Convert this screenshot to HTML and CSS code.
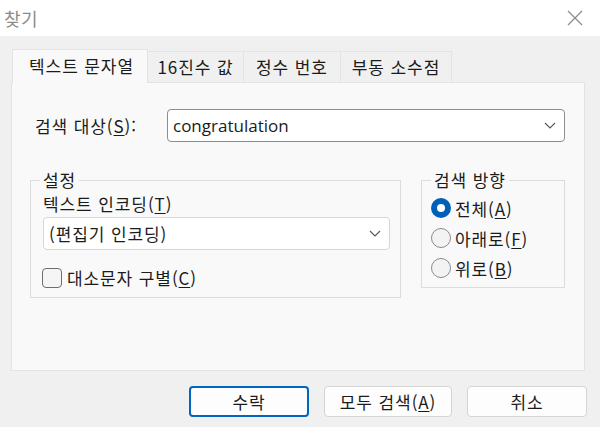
FILE: index.html
```html
<!DOCTYPE html>
<html lang="ko">
<head>
<meta charset="utf-8">
<link rel="stylesheet" href="styles.css">
</head>
<body>
<div class="window">
  <div class="titlebar">
    <span class="title">찾기</span>
    <svg class="close" width="16" height="16" viewBox="0 0 16 16"><path d="M1 1 L15 15 M15 1 L1 15" stroke="#8a8a8a" stroke-width="1.2" fill="none"/></svg>
  </div>
  <div class="body">
    <div class="tabs">
      <div class="tab active">텍스트 문자열</div>
      <div class="tab t2">16진수 값</div>
      <div class="tab t3">정수 번호</div>
      <div class="tab t4">부동 소수점</div>
    </div>
    <div class="panel">
      <div class="search-row">
        <span class="label">검색 대상(<u>S</u>):</span>
        <div class="combo main-combo">
          <span class="combo-text latin">congratulation</span>
          <svg class="chev" width="12" height="7" viewBox="0 0 12 7"><path d="M1 1 L6 6 L11 1" stroke="#5a5a5a" stroke-width="1.2" fill="none"/></svg>
        </div>
      </div>
      <div class="groups">
        <fieldset class="group settings">
          <legend>설정</legend>
          <div class="group-body settings-body">
            <div class="enc-label">텍스트 인코딩(<u>T</u>)</div>
            <div class="combo enc-combo">
              <span class="combo-text">(편집기 인코딩)</span>
              <svg class="chev" width="12" height="7" viewBox="0 0 12 7"><path d="M1 1 L6 6 L11 1" stroke="#5a5a5a" stroke-width="1.2" fill="none"/></svg>
            </div>
            <label class="check-row"><span class="checkbox"></span><span>대소문자 구별(<u>C</u>)</span></label>
          </div>
        </fieldset>
        <fieldset class="group direction">
          <legend>검색 방향</legend>
          <div class="group-body direction-body">
            <div class="radio-row"><span class="radio on"></span><span>전체(<u>A</u>)</span></div>
            <div class="radio-row"><span class="radio"></span><span>아래로(<u>F</u>)</span></div>
            <div class="radio-row"><span class="radio"></span><span>위로(<u>B</u>)</span></div>
          </div>
        </fieldset>
      </div>
    </div>
    <div class="buttons">
      <button class="btn default">수락</button>
      <button class="btn wide">모두 검색(<u>A</u>)</button>
      <button class="btn">취소</button>
    </div>
  </div>
</div>
</body>
</html>
```

FILE: styles.css
```css
* { box-sizing: border-box; }
html, body { margin: 0; padding: 0; }
body {
  width: 600px;
  height: 427px;
  overflow: hidden;
  font-family: "Noto Sans CJK KR", "Noto Sans", sans-serif;
  font-size: 17px;
  letter-spacing: 0.9px;
  color: #1b1b1b;
}
u { text-underline-offset: 2px; text-decoration-thickness: 1px; }
.window {
  width: 600px;
  height: 427px;
  background: #f0f0f0;
  display: flex;
  flex-direction: column;
}
.titlebar {
  height: 36px;
  background: #ffffff;
  display: flex;
  align-items: center;
  justify-content: space-between;
  padding: 0 17px 0 4px;
}
.title {
  font-size: 18px;
  letter-spacing: 0.5px;
  color: #8c8c8c;
  line-height: 20px;
}
.close { display: block; }
.body {
  flex: 1;
  padding: 13px 13px 0 11px;
  display: flex;
  flex-direction: column;
}
.tabs {
  display: flex;
  align-items: flex-end;
  height: 33px;
  padding-left: 1px;
  position: relative;
  z-index: 1;
}
.tab {
  height: 31px;
  line-height: 29px;
  border: 1px solid #e3e3e3;
  border-bottom: none;
  border-left: none;
  background: #f0f0f0;
  text-align: center;
  white-space: nowrap;
}
.tab.active {
  height: 34px;
  margin-bottom: -1px;
  line-height: 32px;
  width: 136px;
  background: #f9f9f9;
  border-left: 1px solid #e3e3e3;
  padding-left: 3px;
}
.tab.t2 { width: 96px; }
.tab.t3 { width: 97px; }
.tab.t4 { width: 111px; }
.panel {
  width: 574px;
  height: 289px;
  background: #f9f9f9;
  border: 1px solid #e3e3e3;
  padding: 26px 0 0 0;
}
.search-row {
  display: flex;
  align-items: center;
  height: 33px;
}
.label {
  width: 155px;
  padding-left: 23px;
  white-space: nowrap;
}
.combo {
  height: 33px;
  background: #ffffff;
  border: 1px solid #8d8d8d;
  border-radius: 4px;
  display: flex;
  align-items: center;
  justify-content: space-between;
  padding: 0 8px 0 5px;
}
.main-combo { width: 398px; }
.latin {
  font-family: "Open Sans", "Noto Sans", sans-serif;
  font-size: 17px;
  letter-spacing: 0;
}
.chev { display: block; }
.groups {
  display: flex;
  gap: 20px;
  margin-top: 28px;
  padding-left: 18px;
}
.group {
  margin: 0;
  border: 1px solid #dcdcdc;
  padding: 0;
  min-width: 0;
}
.group legend {
  padding: 0 3px;
  margin-left: 9px;
  line-height: 20px;
}
.settings {
  width: 371px;
  height: 128px;
}
.settings-body { padding: 3px 10px 0 12px; }
.enc-label { line-height: 22px; white-space: nowrap; }
.enc-combo {
  width: 347px;
  margin-top: 2px;
  border-color: #d6d6d6;
}
.check-row {
  display: flex;
  align-items: center;
  gap: 5px;
  margin-top: 18px;
  margin-left: -1px;
  line-height: 20px;
}
.checkbox {
  width: 20px;
  height: 20px;
  border: 1px solid #6e6e6e;
  border-radius: 4px;
  background: #f5f5f5;
}
.direction {
  width: 144px;
  height: 118px;
}
.direction-body { padding: 3px 0 0 9px; }
.radio-row {
  display: flex;
  align-items: center;
  gap: 4px;
  height: 30px;
  white-space: nowrap;
}
.radio {
  width: 20px;
  height: 20px;
  border-radius: 50%;
  border: 1px solid #8a8a8a;
  background: #f3f3f3;
  flex: none;
}
.radio.on {
  border: 6px solid #005fb8;
  background: #ffffff;
}
.buttons {
  display: flex;
  justify-content: flex-end;
  gap: 15px;
  margin-top: 15px;
}
.btn {
  height: 31px;
  width: 120px;
  font-family: inherit;
  font-size: 17px;
  letter-spacing: 0.9px;
  color: #1b1b1b;
  background: #fdfdfd;
  border: 1px solid #d4d4d4;
  border-radius: 4px;
  padding: 0;
}
.btn.wide { width: 128px; }
.btn.default { border: 2px solid #0067c0; }
```
